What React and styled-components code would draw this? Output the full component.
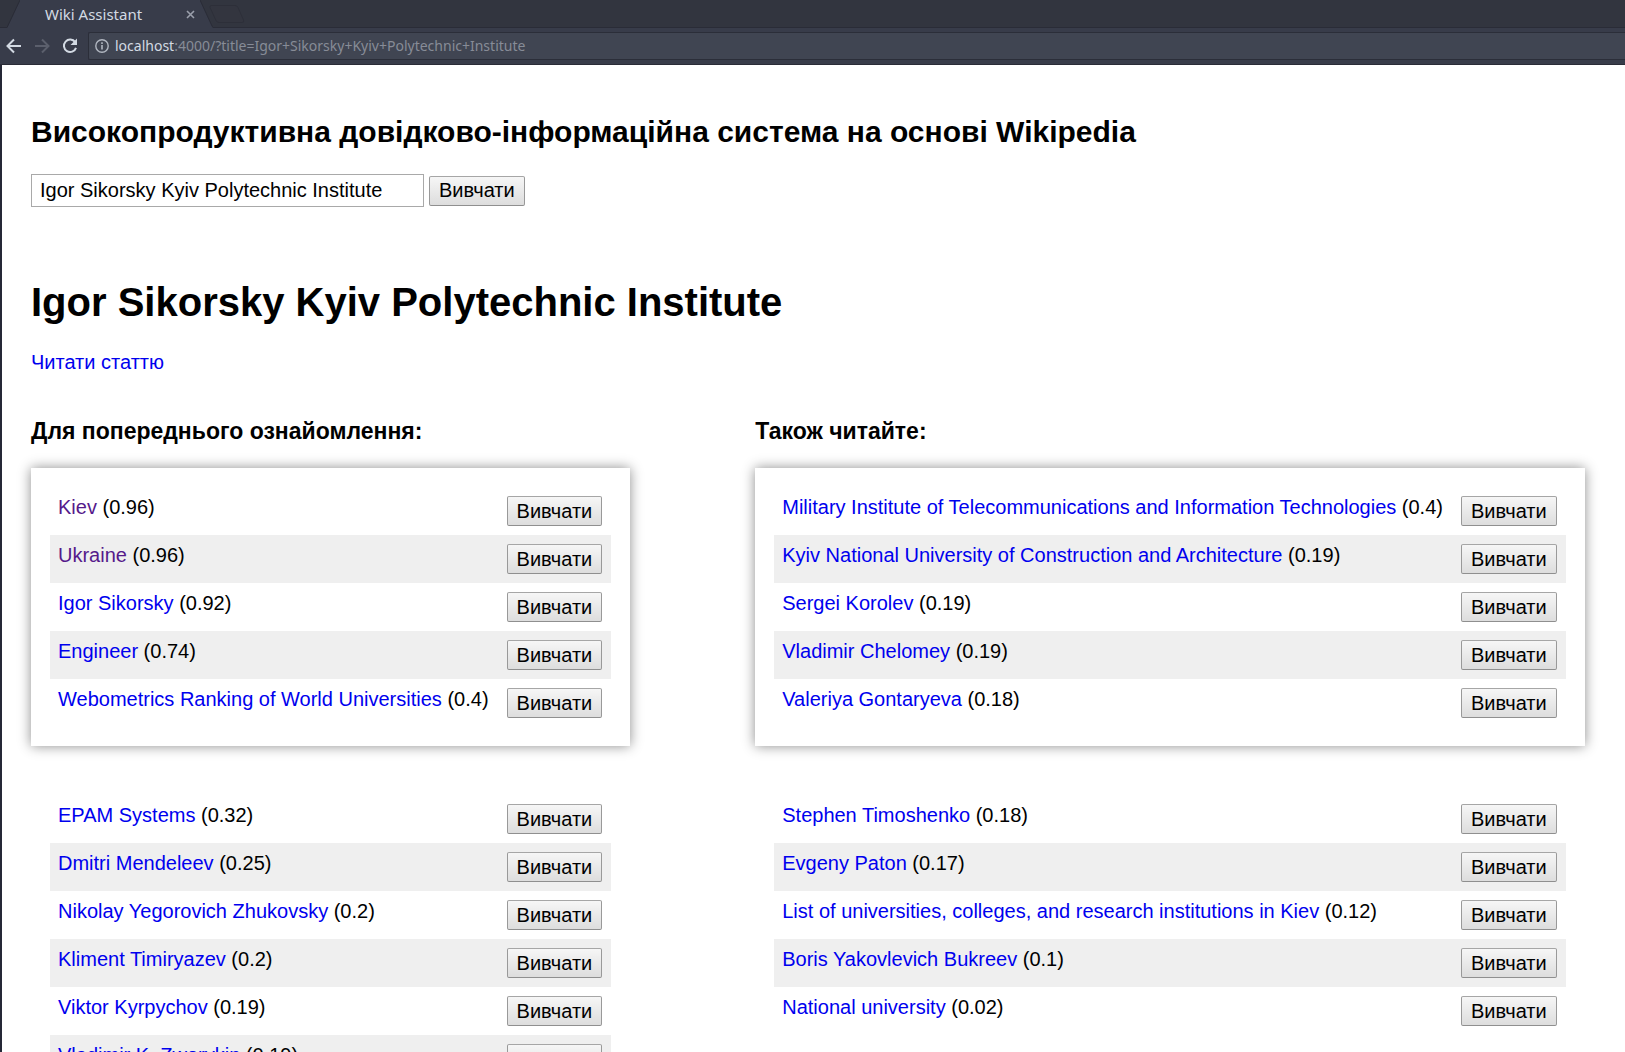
import React, { useState } from "react";
import styled, { createGlobalStyle } from "styled-components";

const GlobalStyle = createGlobalStyle`
  *, *::before, *::after { box-sizing: border-box; }
  html, body, #root { height: 100%; }
  body {
    margin: 0;
    overflow: hidden;
    background: #fff;
    color: #000;
    font: 20px/23px "Liberation Sans", Arial, sans-serif;
  }
`;

const Window = styled.div`
  display: flex;
  flex-direction: column;
  height: 100vh;
`;

const TabStrip = styled.div`
  display: flex;
  align-items: flex-end;
  height: 28px;
  padding-left: 7px;
  background: #32353f;
  box-shadow: inset 0 -1px #2a2c37;
  font: 15px/20px "Noto Sans", "Open Sans", sans-serif;
  color: #d3dae3;
`;

const TabEdge = styled.svg`
  flex: none;
  width: 13px;
  height: 28px;
`;

const Tab = styled.div`
  display: flex;
  align-items: center;
  justify-content: space-between;
  width: 180px;
  height: 28px;
  padding: 0 5px 0 25px;
  background: #383c4a;
  white-space: nowrap;
`;

const IconButton = styled.button`
  display: flex;
  flex: none;
  padding: 0;
  border: 0;
  background: none;
  color: ${(p) => (p.disabled ? "#5b5f6c" : "#d3dae3")};
`;

const NewTab = styled(IconButton)`
  align-self: center;
  margin-left: -4px;
`;

const Toolbar = styled.div`
  display: flex;
  align-items: center;
  height: 37px;
  padding-left: 6px;
  background: #383c4a;
  border-bottom: 1px solid #2a2c37;
`;

const NavButtons = styled.div`
  display: flex;
  gap: 12px;
  width: 82px;
`;

const AddressBar = styled.div`
  display: flex;
  flex: 1;
  align-items: center;
  gap: 6px;
  height: 28px;
  padding-left: 6px;
  background: #404552;
  border: 1px solid #2b2e39;
  border-right: 0;
  border-radius: 2px 0 0 2px;
  color: #b0b6c0;
`;

const Url = styled.span`
  font: 14px/20px "Noto Sans", "Open Sans", sans-serif;
  color: #878c97;
  white-space: nowrap;
`;

const Host = styled.span`
  color: #d3dae3;
`;

const Page = styled.main`
  flex: 1;
  min-height: 0;
  overflow: hidden;
  padding: 50px 29px;
  border-left: 2px solid #252836;
  background: #fff;
`;

const SiteTitle = styled.h2`
  margin: 0 0 25px;
  font-size: 30px;
  line-height: 34px;
`;

const SearchForm = styled.form`
  display: flex;
  align-items: center;
  gap: 5px;
  margin-bottom: 72px;
`;

const SearchInput = styled.input`
  width: 393px;
  height: 33px;
  padding: 0 8px;
  border: 1px solid #a9a9a9;
  background: #fff;
  color: #000;
  font: inherit;
`;

const StudyButton = styled.button`
  display: block;
  height: 30px;
  padding: 0 9px;
  border: 1px solid;
  border-color: #a6a6a6 #999 #8f8f8f #999;
  border-radius: 2px;
  background: linear-gradient(#f6f6f6, #dddddd);
  color: #000;
  font: inherit;
  white-space: nowrap;
`;

const ArticleTitle = styled.h1`
  margin: 0 0 26px;
  font-size: 40px;
  line-height: 46px;
`;

const Link = styled.a`
  color: ${(p) => (p.$visited ? "#551a8b" : "#0000ee")};
  text-decoration: none;
`;

const Columns = styled.div`
  display: flex;
  align-items: flex-start;
  gap: 125px;
  margin-top: 44px;
`;

const ColumnTitle = styled.h3`
  margin: 0 0 23px;
  font-size: 23px;
  line-height: 27px;
`;

const Card = styled.div`
  padding: 19px;
  background: #fff;
  box-shadow: ${(p) => (p.$raised ? "0 0 12px rgba(0, 0, 0, 0.45)" : "none")};

  & + & {
    margin-top: 30px;
  }
`;

const Table = styled.table`
  width: 100%;
  border-collapse: collapse;
`;

const Row = styled.tr`
  height: 48px;

  &:nth-child(even) {
    background: #efefef;
  }
`;

const Cell = styled.td`
  padding: 9px 9px 9px 8px;
  vertical-align: top;
  white-space: nowrap;

  &:last-child {
    width: 1px;
    padding-left: 9px;
  }
`;

const columns = [
  {
    title: "Для попереднього ознайомлення:",
    top: [
      ["Kiev", "0.96", true],
      ["Ukraine", "0.96", true],
      ["Igor Sikorsky", "0.92"],
      ["Engineer", "0.74"],
      ["Webometrics Ranking of World Universities", "0.4"],
    ],
    rest: [
      ["EPAM Systems", "0.32"],
      ["Dmitri Mendeleev", "0.25"],
      ["Nikolay Yegorovich Zhukovsky", "0.2"],
      ["Kliment Timiryazev", "0.2"],
      ["Viktor Kyrpychov", "0.19"],
      ["Vladimir K. Zworykin", "0.19"],
    ],
  },
  {
    title: "Також читайте:",
    top: [
      ["Military Institute of Telecommunications and Information Technologies", "0.4"],
      ["Kyiv National University of Construction and Architecture", "0.19"],
      ["Sergei Korolev", "0.19"],
      ["Vladimir Chelomey", "0.19"],
      ["Valeriya Gontaryeva", "0.18"],
    ],
    rest: [
      ["Stephen Timoshenko", "0.18"],
      ["Evgeny Paton", "0.17"],
      ["List of universities, colleges, and research institutions in Kiev", "0.12"],
      ["Boris Yakovlevich Bukreev", "0.1"],
      ["National university", "0.02"],
    ],
  },
];

function ArticleTable({ rows }) {
  return (
    <Table>
      <tbody>
        {rows.map(([name, score, visited]) => (
          <Row key={name}>
            <Cell>
              <Link href="#" $visited={visited}>{name}</Link> ({score})
            </Cell>
            <Cell>
              <StudyButton type="button">Вивчати</StudyButton>
            </Cell>
          </Row>
        ))}
      </tbody>
    </Table>
  );
}

function BrowserChrome() {
  return (
    <header>
      <TabStrip>
        <TabEdge viewBox="0 0 13 28" aria-hidden="true">
          <path d="M0 28 13 0V28Z" fill="#383c4a" />
          <path d="M0 27.5 13 0" stroke="#2a2c37" fill="none" />
        </TabEdge>
        <Tab>
          <span>Wiki Assistant</span>
          <IconButton aria-label="Close tab">
            <svg width="9" height="9" viewBox="0 0 9 9" fill="none" stroke="#9a9fab" strokeWidth="1.6">
              <path d="M1 1 8 8M8 1 1 8" />
            </svg>
          </IconButton>
        </Tab>
        <TabEdge viewBox="0 0 13 28" aria-hidden="true">
          <path d="M0 0 13 28H0Z" fill="#383c4a" />
          <path d="M0 0 12 26 13 27.5" stroke="#2a2c37" fill="none" />
        </TabEdge>
        <NewTab aria-label="New tab">
          <svg width="36" height="18" viewBox="0 0 36 18" fill="#33353f" stroke="#2d2f39">
            <path d="M2.500.500H26Q28 .500 29 2.500L34.500 15Q35.500 17.500 33 17.500H10Q8 17.500 7 15.500L1 2.500Q.500.500 2.500.500Z" />
          </svg>
        </NewTab>
      </TabStrip>
      <Toolbar>
        <NavButtons>
          <IconButton aria-label="Back">
            <svg width="16" height="16" viewBox="0 0 16 16" fill="none" stroke="currentColor" strokeWidth="2">
              <path d="M15 8H2M8 1.500 1.500 8 8 14.500" />
            </svg>
          </IconButton>
          <IconButton aria-label="Forward" disabled>
            <svg width="16" height="16" viewBox="0 0 16 16" fill="none" stroke="currentColor" strokeWidth="2">
              <path d="M1 8H14M8 1.500 14.500 8 8 14.500" />
            </svg>
          </IconButton>
          <IconButton aria-label="Reload">
            <svg width="16" height="16" viewBox="0 0 16 16">
              <path d="M13.200 4.200A6.200 6.200 0 1 0 14 9.800" fill="none" stroke="currentColor" strokeWidth="2" />
              <path d="M15 .500V7H8.500Z" fill="currentColor" />
            </svg>
          </IconButton>
        </NavButtons>
        <AddressBar>
          <svg width="14" height="14" viewBox="0 0 14 14" fill="none" stroke="currentColor" aria-hidden="true">
            <circle cx="7" cy="7" r="6.200" strokeWidth="1.400" />
            <path d="M7 6V10.500M7 3.300V5" strokeWidth="1.600" />
          </svg>
          <Url>
            <Host>localhost</Host>:4000/?title=Igor+Sikorsky+Kyiv+Polytechnic+Institute
          </Url>
        </AddressBar>
      </Toolbar>
    </header>
  );
}

export default function App() {
  const [query, setQuery] = useState("Igor Sikorsky Kyiv Polytechnic Institute");

  return (
    <Window>
      <GlobalStyle />
      <BrowserChrome />
      <Page>
        <SiteTitle>Високопродуктивна довідково-інформаційна система на основі Wikipedia</SiteTitle>
        <SearchForm onSubmit={(e) => e.preventDefault()}>
          <SearchInput
            type="text"
            name="title"
            aria-label="Назва статті"
            value={query}
            onChange={(e) => setQuery(e.target.value)}
          />
          <StudyButton type="submit">Вивчати</StudyButton>
        </SearchForm>
        <ArticleTitle>Igor Sikorsky Kyiv Polytechnic Institute</ArticleTitle>
        <Link href="#">Читати статтю</Link>
        <Columns>
          {columns.map((column) => (
            <section key={column.title}>
              <ColumnTitle>{column.title}</ColumnTitle>
              <Card $raised>
                <ArticleTable rows={column.top} />
              </Card>
              <Card>
                <ArticleTable rows={column.rest} />
              </Card>
            </section>
          ))}
        </Columns>
      </Page>
    </Window>
  );
}
